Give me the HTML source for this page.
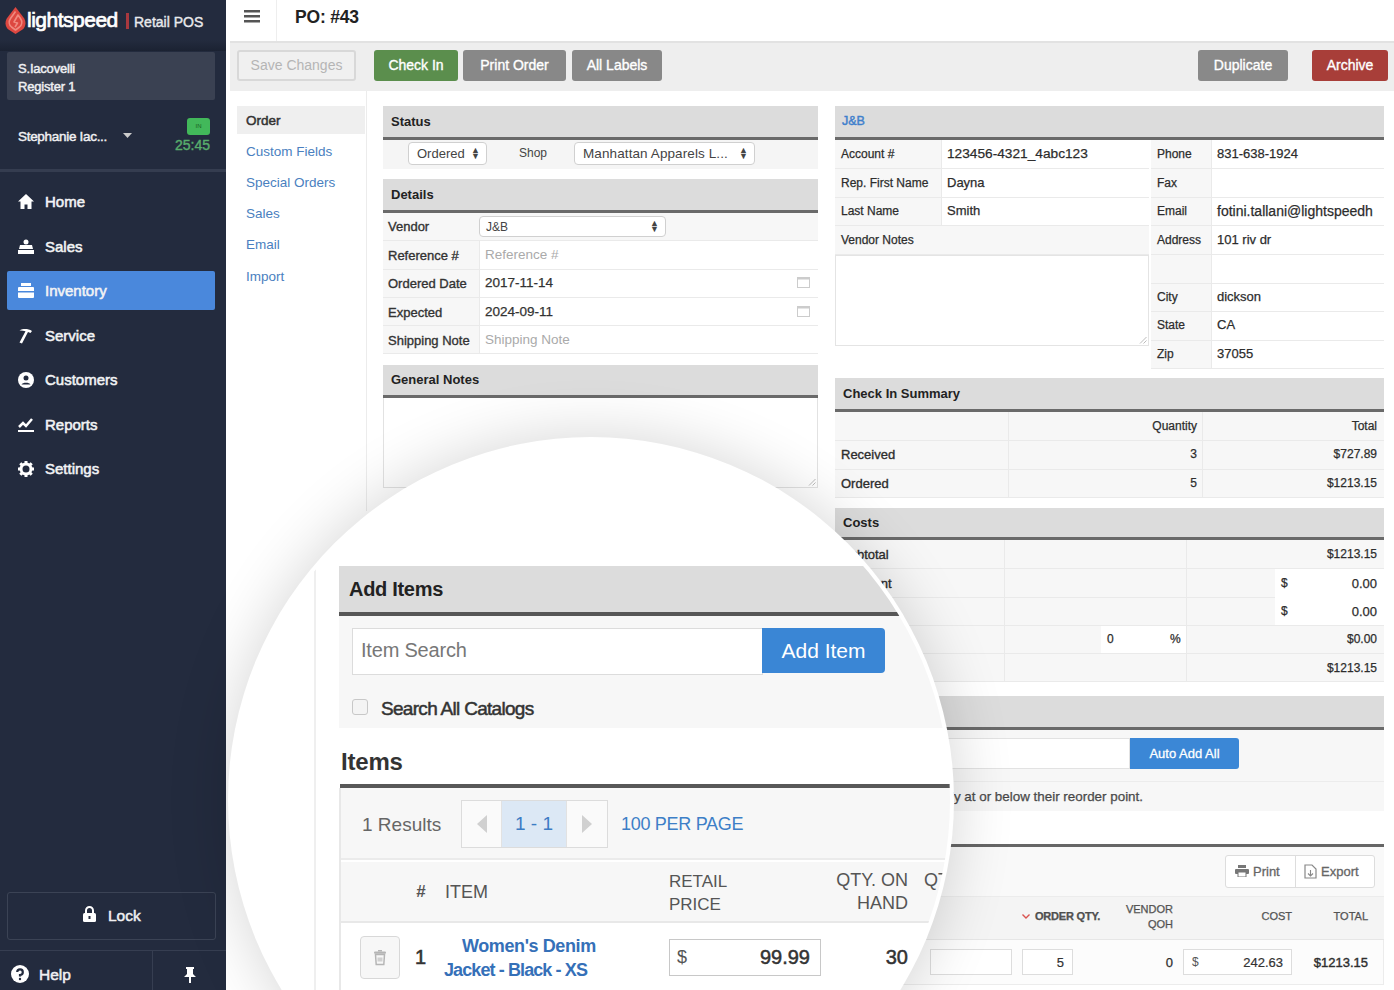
<!DOCTYPE html>
<html><head><meta charset="utf-8">
<style>
*{box-sizing:border-box;}
html,body{margin:0;padding:0;}
body{width:1394px;height:990px;position:relative;overflow:hidden;background:#fff;font-family:"Liberation Sans",sans-serif;color:#333;}
.a{position:absolute;}
#sb{left:0;top:0;width:226px;height:990px;background:#232b3e;color:#fff;}
.nav{position:absolute;left:7px;width:208px;height:39px;font-size:15px;color:#f2f3f5;-webkit-text-stroke:0.55px #f2f3f5;}
.nav span{position:absolute;left:38px;top:11px;}
.nav svg{position:absolute;left:11px;top:12px;}
.btn{position:absolute;top:50px;height:31px;border-radius:3px;color:#fff;font-size:14px;text-align:center;line-height:31px;-webkit-text-stroke:0.35px #fff;}
.ph{position:absolute;background:#dcdcdc;border-bottom:3px solid #6a6a6a;font-size:13px;font-weight:bold;color:#222;padding-left:8px;}
.cell{position:absolute;font-size:12px;color:#2a2a2a;-webkit-text-stroke:0.25px #333;}
.lbl{background:#f7f7f7;}
.hl{position:absolute;height:1px;background:#eaeaea;}
.vl{position:absolute;width:1px;background:#eaeaea;}
</style></head>
<body>
<!-- SIDEBAR -->
<div id="sb" class="a">
  <!-- logo -->
  <svg class="a" style="left:5px;top:7px" width="21" height="27" viewBox="0 0 21 27">
    <path d="M10.5 0 L2.5 10.5 C-0.5 14.5 0 19.5 3.5 22.5 L10.5 27 L17.5 22.5 C21 19.5 21.5 14.5 18.5 10.5 Z" fill="#dd4740"/>
    <path d="M10.5 4.5 L5.5 11.5 C3.5 14.5 4 18 6.5 20 L10.5 23 L14.5 20 C17 18 17.5 14.5 15.5 11.5 L13 8 L9 15 L12.5 16 L10 20" fill="none" stroke="#f08a80" stroke-width="1.6" stroke-linejoin="round"/>
  </svg>
  <div class="a" style="left:27px;top:8px;font-size:21px;color:#fff;letter-spacing:-0.5px;-webkit-text-stroke:0.7px #fff;">lightspeed</div>
  <div class="a" style="left:126px;top:13px;width:2.5px;height:16px;background:#a8383e;"></div>
  <div class="a" style="left:134px;top:14px;font-size:14px;color:#e8e9ec;-webkit-text-stroke:0.4px #e8e9ec;">Retail POS</div>
  <div class="a" style="left:0;top:40px;width:226px;height:11px;background:linear-gradient(#232b3e,#1b2232);"></div>
  <div class="a" style="left:7px;top:52px;width:208px;height:48px;background:#3a4152;border-radius:2px;"></div>
  <div class="a" style="left:18px;top:60px;font-size:13px;color:#f0f0f2;line-height:18px;letter-spacing:-0.2px;-webkit-text-stroke:0.45px #f0f0f2;">S.Iacovelli<br>Register 1</div>
  <div class="a" style="left:18px;top:129px;font-size:13.5px;color:#f0f0f2;letter-spacing:-0.3px;-webkit-text-stroke:0.45px #f0f0f2;">Stephanie Iac...</div>
  <svg class="a" style="left:123px;top:133px" width="9" height="5"><path d="M0 0H9L4.5 5Z" fill="#ccc"/></svg>
  <div class="a" style="left:187px;top:118px;width:23px;height:17px;background:#42b85a;border-radius:3px;font-size:6px;color:#1a5e22;text-align:center;line-height:17px">IN</div>
  <div class="a" style="left:175px;top:137px;font-size:14px;color:#58ad6c;-webkit-text-stroke:0.4px #58ad6c;">25:45</div>
  <div class="a" style="left:0;top:169px;width:226px;height:3px;background:#353d50;"></div>

  <div class="nav" style="top:182px"><svg width="16" height="15" viewBox="0 0 16 15"><path d="M8 0L0 7.5H2.5V15H6.5V10.5H9.5V15H13.5V7.5H16Z" fill="#fff"/></svg><span>Home</span></div>
  <div class="nav" style="top:227px"><svg width="16" height="15" viewBox="0 0 16 15"><circle cx="8" cy="3" r="2.5" fill="#fff"/><path d="M2 6H14L15 10H1Z" fill="#fff"/><rect x="0" y="11" width="16" height="4" fill="#fff"/></svg><span>Sales</span></div>
  <div class="nav" style="top:271px;background:#4a88dc;border-radius:2px;"><svg width="16" height="15" viewBox="0 0 16 15"><rect x="3" y="0" width="10" height="3" fill="#fff"/><rect x="0" y="4" width="16" height="11" rx="1" fill="#fff"/><rect x="0" y="8" width="16" height="1.5" fill="#4a88dc"/></svg><span>Inventory</span></div>
  <div class="nav" style="top:316px"><svg width="16" height="16" viewBox="0 0 16 16"><path d="M1.5 2.5 C5 0.5 10 0.5 14 3 L12.5 5 L10 4 L4 15.5 L1.5 14.5 L7.5 3.2 C5.5 2.6 3.5 2.4 1.5 2.5Z" fill="#fff"/></svg><span>Service</span></div>
  <div class="nav" style="top:360px"><svg width="16" height="16" viewBox="0 0 16 16"><circle cx="8" cy="8" r="8" fill="#fff"/><circle cx="8" cy="6" r="2.5" fill="#232b3e"/><path d="M3.5 12.5C4.5 10 11.5 10 12.5 12.5Z" fill="#232b3e"/></svg><span>Customers</span></div>
  <div class="nav" style="top:405px"><svg width="16" height="16" viewBox="0 0 16 16"><path d="M1 10 L5 6 L8 9 L14 2" fill="none" stroke="#fff" stroke-width="2.5"/><rect x="0" y="13" width="16" height="2" fill="#fff"/></svg><span>Reports</span></div>
  <div class="nav" style="top:449px"><svg width="16" height="16" viewBox="0 0 16 16"><circle cx="8" cy="8" r="5" fill="none" stroke="#fff" stroke-width="3"/><g stroke="#fff" stroke-width="3"><path d="M8 0V3M8 13V16M0 8H3M13 8H16M2.3 2.3L4.4 4.4M11.6 11.6L13.7 13.7M2.3 13.7L4.4 11.6M11.6 4.4L13.7 2.3"/></g></svg><span>Settings</span></div>

  <div class="a" style="left:7px;top:892px;width:209px;height:48px;border:1px solid #3b4355;border-radius:3px;"></div>
  <svg class="a" style="left:83px;top:906px" width="13" height="16" viewBox="0 0 13 16"><path d="M3 7V4.5A3.5 3.5 0 0 1 10 4.5V7" fill="none" stroke="#fff" stroke-width="2"/><rect x="0" y="7" width="13" height="9" rx="1.5" fill="#fff"/><rect x="5.5" y="10" width="2" height="3" fill="#232b3e"/></svg>
  <div class="a" style="left:108px;top:907px;font-size:15.5px;color:#f0f0f2;-webkit-text-stroke:0.5px #f0f0f2;">Lock</div>
  <div class="a" style="left:0;top:950px;width:226px;height:1px;background:#363e51;"></div>
  <div class="a" style="left:152px;top:951px;width:1px;height:39px;background:#363e51;"></div>
  <svg class="a" style="left:11px;top:965px" width="18" height="18" viewBox="0 0 18 18"><circle cx="9" cy="9" r="9" fill="#fff"/><path d="M6.2 7A2.8 2.8 0 1 1 9 10V11.5" fill="none" stroke="#232b3e" stroke-width="2.2"/><circle cx="9" cy="14" r="1.2" fill="#232b3e"/></svg>
  <div class="a" style="left:39px;top:966px;font-size:15.5px;color:#f0f0f2;-webkit-text-stroke:0.5px #f0f0f2;">Help</div>
  <svg class="a" style="left:184px;top:967px" width="12" height="16" viewBox="0 0 12 16"><path d="M2 0H10V2H9V7L12 10H7V16H5V10H0L3 7V2H2Z" fill="#fff"/></svg>
</div>

<!-- TOP BAR -->
<div class="a" style="left:226px;top:0;width:1168px;height:41px;background:#fff;"></div>
<div class="a" style="left:276px;top:0;width:1px;height:41px;background:#eee;"></div>
<svg class="a" style="left:244px;top:10px" width="16" height="13" viewBox="0 0 16 13"><rect y="0" width="16" height="2.5" fill="#555"/><rect y="5" width="16" height="2.5" fill="#555"/><rect y="10" width="16" height="2.5" fill="#555"/></svg>
<div class="a" style="left:295px;top:7px;font-size:17.5px;font-weight:bold;color:#222;letter-spacing:-0.2px;">PO: #43</div>

<!-- TOOLBAR -->
<div class="a" style="left:230px;top:41px;width:1164px;height:50px;background:#eeeeee;border-top:2px solid #e2e2e2;"></div>
<div class="btn" style="left:237px;width:119px;border:2px solid #d8d8d8;color:#b5b5b5;line-height:27px;background:#f0f0f0;-webkit-text-stroke:0;">Save Changes</div>
<div class="btn" style="left:374px;width:84px;background:#5b8e4d;">Check In</div>
<div class="btn" style="left:463px;width:103px;background:#888888;">Print Order</div>
<div class="btn" style="left:572px;width:90px;background:#888888;">All Labels</div>
<div class="btn" style="left:1198px;width:90px;background:#898989;">Duplicate</div>
<div class="btn" style="left:1312px;width:76px;background:#a83e39;">Archive</div>


<!-- LEFT SUBNAV -->
<div class="a" style="left:366px;top:91px;width:1px;height:420px;background:#ececec;"></div>
<div class="a" style="left:237px;top:106px;width:128px;height:28px;background:#efefef;"></div>
<div class="a" style="left:246px;top:113px;font-size:13.5px;color:#333;-webkit-text-stroke:0.5px #333;">Order</div>
<div class="a" style="left:246px;top:144px;font-size:13.5px;color:#4a7fc0;line-height:16px;">Custom Fields</div>
<div class="a" style="left:246px;top:175px;font-size:13.5px;color:#4a7fc0;">Special Orders</div>
<div class="a" style="left:246px;top:206px;font-size:13.5px;color:#4a7fc0;">Sales</div>
<div class="a" style="left:246px;top:237px;font-size:13.5px;color:#4a7fc0;">Email</div>
<div class="a" style="left:246px;top:269px;font-size:13.5px;color:#4a7fc0;">Import</div>

<!-- STATUS -->
<div class="ph" style="left:383px;top:106px;width:435px;height:34px;line-height:31px;">Status</div>
<div class="a" style="left:383px;top:140px;width:435px;height:29px;background:#f5f5f5;"></div>
<div class="a" style="left:408px;top:142px;width:79px;height:23px;background:#fff;border:1px solid #d0d0d0;border-radius:4px;font-size:13px;color:#444;padding:3px 0 0 8px;">Ordered <span style="position:absolute;right:6px;top:4px;font-size:9px;line-height:6px;">&#9650;<br>&#9660;</span></div>
<div class="a" style="left:519px;top:146px;font-size:12px;color:#444;">Shop</div>
<div class="a" style="left:574px;top:142px;width:181px;height:23px;background:#fff;border:1px solid #d0d0d0;border-radius:4px;font-size:13.5px;color:#444;padding:3px 0 0 8px;letter-spacing:0.1px;">Manhattan Apparels L... <span style="position:absolute;right:6px;top:4px;font-size:9px;line-height:6px;">&#9650;<br>&#9660;</span></div>

<!-- DETAILS -->
<div class="ph" style="left:383px;top:179px;width:435px;height:34px;line-height:31px;">Details</div>
<div class="a" style="left:383px;top:213px;width:435px;height:141px;background:#fff;"></div>
<div class="a lbl" style="left:383px;top:213px;width:96px;height:141px;"></div>
<div class="a lbl" style="left:479px;top:213px;width:339px;height:28px;"></div>
<div class="hl" style="left:383px;top:240px;width:435px;"></div>
<div class="hl" style="left:383px;top:269px;width:435px;"></div>
<div class="hl" style="left:383px;top:297px;width:435px;"></div>
<div class="hl" style="left:383px;top:325px;width:435px;"></div>
<div class="hl" style="left:383px;top:353px;width:435px;"></div>
<div class="vl" style="left:479px;top:240px;height:114px;"></div>
<div class="cell" style="left:388px;top:219px;font-size:13px;color:#333;-webkit-text-stroke:0.35px #333;">Vendor</div>
<div class="a" style="left:479px;top:216px;width:187px;height:21px;background:#fff;border:1px solid #d0d0d0;border-radius:4px;font-size:12px;color:#444;padding:3px 0 0 6px;">J&amp;B<span style="position:absolute;right:6px;top:3px;font-size:9px;line-height:6px;">&#9650;<br>&#9660;</span></div>
<div class="cell" style="left:388px;top:248px;font-size:13px;color:#333;-webkit-text-stroke:0.35px #333;">Reference #</div>
<div class="cell" style="left:485px;top:247px;color:#aaa;font-size:13.5px;-webkit-text-stroke:0;">Reference #</div>
<div class="cell" style="left:388px;top:276px;font-size:13px;color:#333;-webkit-text-stroke:0.35px #333;">Ordered Date</div>
<div class="cell" style="left:485px;top:275px;font-size:13.5px;color:#333;">2017-11-14</div>
<div class="cell" style="left:388px;top:305px;font-size:13px;color:#333;-webkit-text-stroke:0.35px #333;">Expected</div>
<div class="cell" style="left:485px;top:304px;font-size:13.5px;color:#333;">2024-09-11</div>
<div class="cell" style="left:388px;top:333px;font-size:13px;color:#333;-webkit-text-stroke:0.35px #333;">Shipping Note</div>
<div class="cell" style="left:485px;top:332px;color:#aaa;font-size:13.5px;-webkit-text-stroke:0;">Shipping Note</div>
<svg class="a" style="left:797px;top:276px" width="13" height="12"><rect x="0.5" y="1.5" width="12" height="10" fill="none" stroke="#ccc"/><rect x="0.5" y="1.5" width="12" height="2" fill="#ccc"/></svg>
<svg class="a" style="left:797px;top:305px" width="13" height="12"><rect x="0.5" y="1.5" width="12" height="10" fill="none" stroke="#ccc"/><rect x="0.5" y="1.5" width="12" height="2" fill="#ccc"/></svg>

<!-- GENERAL NOTES -->
<div class="ph" style="left:383px;top:365px;width:435px;height:33px;line-height:30px;">General Notes</div>
<div class="a" style="left:383px;top:398px;width:435px;height:90px;background:#fff;border:1px solid #e2e2e2;border-top:0;"></div>

<svg class="a" style="left:808px;top:478px" width="8" height="8"><path d="M7.5 1L1 7.5M7.5 4.5L4.5 7.5" stroke="#bbb" stroke-width="1"/></svg>
<!-- J&B -->
<div class="ph" style="left:835px;top:106px;width:549px;height:34px;line-height:31px;color:#3f80cc;font-weight:normal;padding-left:7px;font-size:12.5px;-webkit-text-stroke:0.45px #3f80cc;">J&amp;B</div>
<div class="a" style="left:835px;top:140px;width:549px;height:229px;background:#fff;"></div>
<div class="a lbl" style="left:835px;top:140px;width:106px;height:85px;"></div>
<div class="a lbl" style="left:835px;top:225px;width:314px;height:29px;"></div>
<div class="a lbl" style="left:1151px;top:140px;width:60px;height:229px;"></div>
<div class="hl" style="left:835px;top:168px;width:314px;"></div>
<div class="hl" style="left:835px;top:197px;width:314px;"></div>
<div class="hl" style="left:835px;top:225px;width:314px;"></div>
<div class="hl" style="left:835px;top:254px;width:314px;"></div>
<div class="vl" style="left:941px;top:140px;height:85px;"></div>
<div class="a" style="left:835px;top:255px;width:314px;height:91px;border:1px solid #e4e4e4;background:#fff;"></div>
<svg class="a" style="left:1139px;top:336px" width="8" height="8"><path d="M7.5 1L1 7.5M7.5 4.5L4.5 7.5" stroke="#bbb" stroke-width="1"/></svg>
<div class="hl" style="left:1151px;top:168px;width:233px;"></div>
<div class="hl" style="left:1151px;top:197px;width:233px;"></div>
<div class="hl" style="left:1151px;top:225px;width:233px;"></div>
<div class="hl" style="left:1151px;top:254px;width:233px;"></div>
<div class="hl" style="left:1151px;top:283px;width:233px;"></div>
<div class="hl" style="left:1151px;top:311px;width:233px;"></div>
<div class="hl" style="left:1151px;top:340px;width:233px;"></div>
<div class="hl" style="left:1151px;top:368px;width:233px;"></div>
<div class="vl" style="left:1211px;top:140px;height:229px;"></div>
<div class="cell" style="left:841px;top:147px;">Account #</div>
<div class="cell" style="left:947px;top:146px;font-size:13.7px;">123456-4321_4abc123</div>
<div class="cell" style="left:841px;top:176px;">Rep. First Name</div>
<div class="cell" style="left:947px;top:175px;font-size:13px;">Dayna</div>
<div class="cell" style="left:841px;top:204px;">Last Name</div>
<div class="cell" style="left:947px;top:203px;font-size:13px;">Smith</div>
<div class="cell" style="left:841px;top:233px;">Vendor Notes</div>
<div class="cell" style="left:1157px;top:147px;">Phone</div>
<div class="cell" style="left:1217px;top:146px;font-size:13px;">831-638-1924</div>
<div class="cell" style="left:1157px;top:176px;">Fax</div>
<div class="cell" style="left:1157px;top:204px;">Email</div>
<div class="cell" style="left:1217px;top:203px;font-size:14px;">fotini.tallani@lightspeedh</div>
<div class="cell" style="left:1157px;top:233px;">Address</div>
<div class="cell" style="left:1217px;top:232px;font-size:13px;">101 riv dr</div>
<div class="cell" style="left:1157px;top:290px;">City</div>
<div class="cell" style="left:1217px;top:289px;font-size:13px;">dickson</div>
<div class="cell" style="left:1157px;top:318px;">State</div>
<div class="cell" style="left:1217px;top:317px;font-size:13px;">CA</div>
<div class="cell" style="left:1157px;top:347px;">Zip</div>
<div class="cell" style="left:1217px;top:346px;font-size:13px;">37055</div>

<!-- CHECK IN SUMMARY -->
<div class="ph" style="left:835px;top:378px;width:549px;height:34px;line-height:31px;">Check In Summary</div>
<div class="a lbl" style="left:835px;top:412px;width:549px;height:86px;"></div>
<div class="hl" style="left:835px;top:440px;width:549px;"></div>
<div class="hl" style="left:835px;top:469px;width:549px;"></div>
<div class="hl" style="left:835px;top:497px;width:549px;"></div>
<div class="vl" style="left:1008px;top:412px;height:86px;"></div>
<div class="vl" style="left:1202px;top:412px;height:86px;"></div>
<div class="cell" style="left:1000px;top:419px;width:197px;text-align:right;">Quantity</div>
<div class="cell" style="left:1200px;top:419px;width:177px;text-align:right;">Total</div>
<div class="cell" style="left:841px;top:447px;font-size:13px;-webkit-text-stroke:0.35px #333;">Received</div>
<div class="cell" style="left:1000px;top:447px;width:197px;text-align:right;">3</div>
<div class="cell" style="left:1200px;top:447px;width:177px;text-align:right;">$727.89</div>
<div class="cell" style="left:841px;top:476px;font-size:13px;-webkit-text-stroke:0.35px #333;">Ordered</div>
<div class="cell" style="left:1000px;top:476px;width:197px;text-align:right;">5</div>
<div class="cell" style="left:1200px;top:476px;width:177px;text-align:right;">$1213.15</div>

<!-- COSTS -->
<div class="ph" style="left:835px;top:508px;width:549px;height:32px;line-height:29px;">Costs</div>
<div class="a lbl" style="left:835px;top:540px;width:549px;height:142px;"></div>
<div class="hl" style="left:835px;top:568px;width:549px;"></div>
<div class="hl" style="left:835px;top:597px;width:549px;"></div>
<div class="hl" style="left:835px;top:625px;width:549px;"></div>
<div class="hl" style="left:835px;top:653px;width:549px;"></div>
<div class="hl" style="left:835px;top:681px;width:549px;"></div>
<div class="vl" style="left:1004px;top:540px;height:142px;"></div>
<div class="vl" style="left:1186px;top:540px;height:142px;"></div>
<div class="a" style="left:1275px;top:569px;width:109px;height:56px;background:#fff;"></div>
<div class="a" style="left:1101px;top:626px;width:85px;height:27px;background:#fff;"></div>
<div class="cell" style="left:841px;top:547px;font-size:13px;-webkit-text-stroke:0.35px #333;">Subtotal</div>
<div class="cell" style="left:1200px;top:547px;width:177px;text-align:right;">$1213.15</div>
<div class="cell" style="left:841px;top:576px;font-size:13px;-webkit-text-stroke:0.35px #333;">Discount</div>
<div class="cell" style="left:1281px;top:576px;">$</div>
<div class="cell" style="left:1300px;top:576px;width:77px;text-align:right;font-size:13px;">0.00</div>
<div class="cell" style="left:841px;top:604px;font-size:13px;-webkit-text-stroke:0.35px #333;">Shipping</div>
<div class="cell" style="left:1281px;top:604px;">$</div>
<div class="cell" style="left:1300px;top:604px;width:77px;text-align:right;font-size:13px;">0.00</div>
<div class="cell" style="left:841px;top:632px;font-size:13px;-webkit-text-stroke:0.35px #333;">Tax</div>
<div class="cell" style="left:1107px;top:632px;">0</div>
<div class="cell" style="left:1170px;top:632px;">%</div>
<div class="cell" style="left:1200px;top:632px;width:177px;text-align:right;">$0.00</div>
<div class="cell" style="left:841px;top:661px;font-size:13px;-webkit-text-stroke:0.35px #333;">Total</div>
<div class="cell" style="left:1200px;top:661px;width:177px;text-align:right;">$1213.15</div>

<!-- REORDER -->
<div class="ph" style="left:835px;top:696px;width:549px;height:34px;line-height:31px;">Reorder Points</div>
<div class="a lbl" style="left:835px;top:730px;width:549px;height:81px;"></div>
<div class="a" style="left:845px;top:738px;width:285px;height:31px;background:#fff;border:1px solid #e2e2e2;"></div>
<div class="a" style="left:1130px;top:738px;width:109px;height:31px;background:#3b87d6;border-radius:0 3px 3px 0;color:#fff;font-size:13px;text-align:center;line-height:31px;-webkit-text-stroke:0.3px #fff;">Auto Add All</div>
<div class="hl" style="left:835px;top:781px;width:549px;background:#ececec"></div>
<div class="cell" style="left:543px;top:789px;width:600px;text-align:right;white-space:nowrap;font-size:13.4px;color:#555;">Add all items with inventory currently at or below their reorder point.</div>

<!-- ITEMS TABLE (bottom-right) -->
<div class="a" style="left:835px;top:844px;width:549px;height:3px;background:#666;"></div>
<div class="a" style="left:835px;top:847px;width:549px;height:49px;background:#f9f9f9;"></div>
<div class="a" style="left:835px;top:896px;width:549px;height:44px;background:#f4f4f4;border-top:1px solid #ececec;border-bottom:1px solid #e6e6e6;"></div>
<div class="a" style="left:835px;top:940px;width:549px;height:45px;background:#fcfcfc;border-bottom:1px solid #ececec;border-right:1px solid #ececec;"></div>
<div class="a" style="left:1225px;top:855px;width:150px;height:33px;background:#fff;border:1px solid #ddd;border-radius:3px;"></div>
<div class="vl" style="left:1295px;top:855px;height:33px;background:#ddd"></div>
<svg class="a" style="left:1235px;top:865px" width="14" height="12" viewBox="0 0 14 12"><rect x="3" y="0" width="8" height="3" fill="#777"/><rect x="0" y="4" width="14" height="5" rx="1" fill="#777"/><rect x="3" y="7" width="8" height="5" fill="#fff" stroke="#777"/></svg>
<div class="cell" style="left:1253px;top:864px;font-size:13px;color:#666;-webkit-text-stroke:0.3px #666;">Print</div>
<svg class="a" style="left:1304px;top:864px" width="13" height="15" viewBox="0 0 13 15"><path d="M1 1H8L12 5V14H1Z" fill="none" stroke="#888" stroke-width="1.2"/><path d="M6.5 6V12M4 9.5L6.5 12L9 9.5" fill="none" stroke="#888" stroke-width="1.1"/></svg>
<div class="cell" style="left:1321px;top:864px;font-size:13px;color:#666;-webkit-text-stroke:0.3px #666;">Export</div>
<svg class="a" style="left:1022px;top:914px" width="8" height="5"><path d="M0.5 0.5L4 4L7.5 0.5" fill="none" stroke="#d9534f" stroke-width="1.4"/></svg>
<div class="cell" style="left:1035px;top:910px;font-size:11px;font-weight:bold;color:#555;letter-spacing:-0.2px;">ORDER QTY.</div>
<div class="cell" style="left:1100px;top:902px;width:73px;font-size:11px;color:#666;text-align:right;line-height:15px;">VENDOR<br>QOH</div>
<div class="cell" style="left:1230px;top:910px;width:62px;font-size:11px;color:#666;text-align:right;">COST</div>
<div class="cell" style="left:1300px;top:910px;width:68px;font-size:11px;color:#666;text-align:right;">TOTAL</div>
<div class="a" style="left:930px;top:949px;width:82px;height:26px;background:#fff;border:1px solid #ddd;"></div>
<div class="a" style="left:1022px;top:949px;width:51px;height:26px;background:#fff;border:1px solid #ddd;font-size:13px;text-align:right;padding:5px 8px 0 0;-webkit-text-stroke:0.2px #333;">5</div>
<div class="cell" style="left:1100px;top:955px;width:73px;text-align:right;font-size:13px;">0</div>
<div class="a" style="left:1183px;top:949px;width:109px;height:26px;background:#fff;border:1px solid #ddd;font-size:12px;padding:5px 8px 0 8px;color:#555;">$<span style="float:right;font-size:13px;color:#333;-webkit-text-stroke:0.2px #333;">242.63</span></div>
<div class="cell" style="left:1290px;top:955px;width:78px;text-align:right;font-size:13px;-webkit-text-stroke:0.4px #333;">$1213.15</div>

<!-- MAGNIFIER -->
<div class="a" style="left:228px;top:437px;width:726px;height:726px;border-radius:50%;background:#fff;box-shadow:0 0 60px 2px rgba(0,0,0,0.16);"></div>
<div class="a" style="left:232px;top:441px;width:718px;height:718px;border-radius:50%;overflow:hidden;background:#fff;">
 <div class="a" style="left:-232px;top:-441px;width:1394px;height:990px;">
  <div class="a" style="left:314px;top:437px;width:2px;height:560px;background:#efefef;"></div>
  <!-- Add Items -->
  <div class="a" style="left:339px;top:566px;width:700px;height:50px;background:#dcdcdc;border-bottom:4px solid #575757;"></div>
  <div class="a" style="left:349px;top:578px;font-size:20px;font-weight:bold;color:#222;letter-spacing:-0.3px;">Add Items</div>
  <div class="a" style="left:339px;top:616px;width:700px;height:112px;background:#f7f7f7;"></div>
  <div class="a" style="left:352px;top:628px;width:411px;height:47px;background:#fff;border:1px solid #dcdcdc;"></div>
  <div class="a" style="left:361px;top:639px;font-size:20px;color:#777;letter-spacing:-0.2px;">Item Search</div>
  <div class="a" style="left:762px;top:628px;width:123px;height:45px;background:#3a86d5;border-radius:0 4px 4px 0;color:#fff;font-size:21px;text-align:center;line-height:45px;">Add Item</div>
  <div class="a" style="left:352px;top:699px;width:16px;height:16px;background:#f4f4f4;border:1px solid #c8c8c8;border-radius:3px;"></div>
  <div class="a" style="left:381px;top:698px;font-size:19px;color:#333;letter-spacing:-0.7px;-webkit-text-stroke:0.5px #333;">Search All Catalogs</div>
  <!-- Items -->
  <div class="a" style="left:341px;top:748px;font-size:24px;font-weight:bold;color:#333;letter-spacing:-0.2px;">Items</div>
  <div class="a" style="left:340px;top:784px;width:700px;height:4px;background:#585858;"></div>
  <div class="a" style="left:340px;top:788px;width:700px;height:72px;background:#f7f7f7;border-bottom:2px solid #ebebeb;"></div>
  <div class="a" style="left:362px;top:814px;font-size:19px;color:#666;">1 Results</div>
  <div class="a" style="left:461px;top:800px;width:147px;height:48px;background:#fafafa;border:1px solid #dcdcdc;"></div>
  <div class="a" style="left:501px;top:801px;width:66px;height:46px;background:#dce8f5;border-left:1px solid #e2e2e2;border-right:1px solid #e2e2e2;"></div>
  <svg class="a" style="left:477px;top:815px" width="10" height="18"><path d="M10 0V18L0 9Z" fill="#d0d0d0"/></svg>
  <svg class="a" style="left:582px;top:815px" width="10" height="18"><path d="M0 0V18L10 9Z" fill="#d0d0d0"/></svg>
  <div class="a" style="left:501px;top:813px;width:66px;text-align:center;font-size:19px;color:#3c7cc4;">1 - 1</div>
  <div class="a" style="left:621px;top:814px;font-size:18px;color:#3d7fc7;letter-spacing:-0.3px;">100 PER PAGE</div>
  <div class="a" style="left:340px;top:862px;width:700px;height:61px;background:#f7f7f7;border-bottom:2px solid #e8e8e8;"></div>
  <div class="a" style="left:416px;top:882px;font-size:17px;font-weight:bold;font-style:italic;color:#555;">#</div>
  <div class="a" style="left:445px;top:882px;font-size:18px;color:#555;">ITEM</div>
  <div class="a" style="left:669px;top:870px;font-size:17px;color:#555;line-height:23px;">RETAIL<br>PRICE</div>
  <div class="a" style="left:808px;top:869px;width:100px;text-align:right;font-size:18px;color:#555;line-height:23px;">QTY. ON<br>HAND</div>
  <div class="a" style="left:924px;top:869px;font-size:18px;color:#555;line-height:23px;">QTY.</div>
  <div class="a" style="left:340px;top:925px;width:700px;height:80px;background:#fff;"></div>
  <div class="a" style="left:339px;top:788px;width:2px;height:210px;background:#e8e8e8;"></div>
  <div class="a" style="left:360px;top:936px;width:40px;height:43px;background:#f7f7f7;border:1px solid #d8d8d8;border-radius:4px;"></div>
  <svg class="a" style="left:373px;top:949px" width="14" height="17" viewBox="0 0 14 17"><path d="M5 1H9V2.5H5Z" fill="#b5b5b5"/><rect x="1" y="2.5" width="12" height="2.2" rx="1" fill="#b5b5b5"/><path d="M2.5 5.5H11.5L10.8 15.5H3.2Z" fill="none" stroke="#b5b5b5" stroke-width="1.5"/><path d="M4.5 8.5H9.5V12.5H4.5Z" fill="#d0d0d0"/></svg>
  <div class="a" style="left:415px;top:946px;font-size:20px;color:#333;-webkit-text-stroke:0.6px #333;">1</div>
  <div class="a" style="left:462px;top:936px;font-size:18px;font-weight:bold;color:#3570b8;letter-spacing:-0.4px;white-space:nowrap;">Women's Denim</div><div class="a" style="left:444px;top:960px;font-size:18px;font-weight:bold;color:#3570b8;letter-spacing:-0.9px;white-space:nowrap;">Jacket - Black - XS</div>
  <div class="a" style="left:669px;top:939px;width:152px;height:37px;background:#fff;border:1px solid #c8c8c8;"></div>
  <div class="a" style="left:677px;top:947px;font-size:18px;color:#555;">$</div>
  <div class="a" style="left:700px;top:946px;width:110px;text-align:right;font-size:20px;color:#333;-webkit-text-stroke:0.5px #333;">99.99</div>
  <div class="a" style="left:808px;top:946px;width:100px;text-align:right;font-size:20px;color:#333;-webkit-text-stroke:0.5px #333;">30</div>
 </div>
</div>

</body></html>
